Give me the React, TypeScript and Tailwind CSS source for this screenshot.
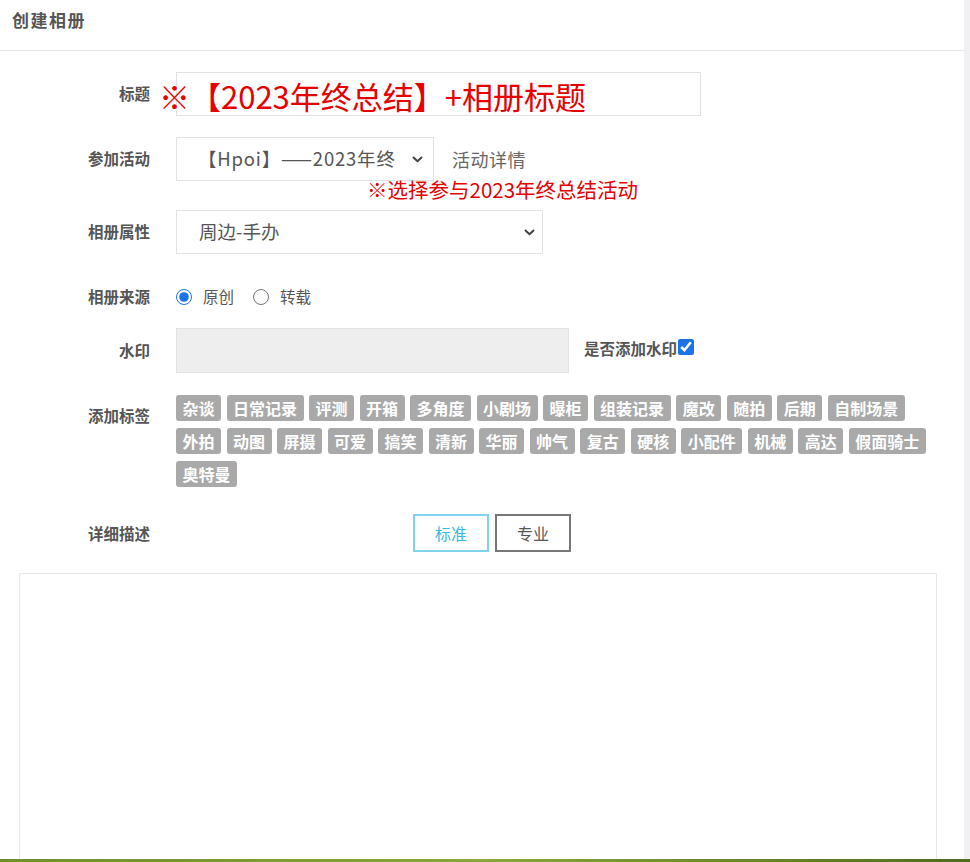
import React from 'react';

const tags = [
  '杂谈', '日常记录', '评测', '开箱', '多角度', '小剧场', '曝柜', '组装记录', '魔改', '随拍', '后期', '自制场景',
  '外拍', '动图', '屏摄', '可爱', '搞笑', '清新', '华丽', '帅气', '复古', '硬核', '小配件', '机械', '高达', '假面骑士',
  '奥特曼',
];

function Chevron() {
  return (
    <svg width="11" height="7" viewBox="0 0 11 7" className="shrink-0">
      <polyline points="1.5,1.5 5.5,5.3 9.5,1.5" fill="none" stroke="#444" strokeWidth="2" strokeLinecap="round" strokeLinejoin="round" />
    </svg>
  );
}

function Label({ children, className = '' }: { children: React.ReactNode; className?: string }) {
  return (
    <div className={`w-[150px] shrink-0 text-right text-[15.5px] font-bold text-[#555] ${className}`}>{children}</div>
  );
}

export default function App() {
  return (
    <div className="w-[970px] h-[862px] overflow-hidden flex flex-col bg-white font-['Noto_Sans_CJK_SC','Noto_Sans',sans-serif]">
      <div className="flex flex-1 min-h-0">
        <div className="w-[964px] flex flex-col min-h-0">
          {/* header */}
          <div className="h-[51px] shrink-0 border-b border-[#e6e6e6] pl-[12px] pt-[8px]">
            <span className="text-[17px] leading-[22px] font-bold text-[#555] tracking-[1.5px]">创建相册</span>
          </div>

          {/* title */}
          <div className="relative mt-[21px] flex h-[44px] items-center">
            <Label>标题</Label>
            <div className="ml-[26px] h-[44px] w-[525px] border border-[#e2e2e2]" />
            <div className="absolute left-[159px] top-[4px] text-[31px] leading-[40px] text-[#e60000] whitespace-nowrap">
              ※【2023年终总结】+相册标题
            </div>
          </div>

          {/* activity */}
          <div className="mt-[21px] flex h-[44px] items-center">
            <Label>参加活动</Label>
            <div className="ml-[26px] flex h-[44px] w-[258px] items-center border border-[#e2e2e2] pl-[21px] pr-[10px]">
              <div className="w-[203px] shrink-0 overflow-hidden whitespace-nowrap text-[18.5px] tracking-[0.8px] text-[#555]">【Hpoi】——2023年终</div>
              <div className="ml-auto"><Chevron /></div>
            </div>
            <div className="ml-[18px] text-[18px] text-[#666] tracking-[0.5px]">活动详情</div>
          </div>
          <div className="-mt-[2px] h-[20px] pl-[367px] text-[20.5px] leading-[20px] text-[#e60000] whitespace-nowrap">
            ※选择参与2023年终总结活动
          </div>

          {/* attribute */}
          <div className="mt-[11px] flex h-[44px] items-center">
            <Label>相册属性</Label>
            <div className="ml-[26px] flex h-[44px] w-[367px] items-center border border-[#e2e2e2] pl-[22px] pr-[7px]">
              <div className="flex-1 text-[18.5px] text-[#555]">周边-手办</div>
              <Chevron />
            </div>
          </div>

          {/* source */}
          <div className="mt-[31px] flex h-[24px] items-center">
            <Label>相册来源</Label>
            <label className="ml-[26px] flex items-center">
              <input type="radio" name="src" defaultChecked className="m-0 h-[16px] w-[16px] accent-[#1a73e8]" />
              <span className="ml-[11px] text-[15.5px] text-[#555]">原创</span>
            </label>
            <label className="ml-[19px] flex items-center">
              <input type="radio" name="src" className="m-0 h-[16px] w-[16px]" />
              <span className="ml-[11px] text-[15.5px] text-[#555]">转载</span>
            </label>
          </div>

          {/* watermark */}
          <div className="mt-[19px] flex h-[45px] items-center">
            <Label>水印</Label>
            <div className="ml-[26px] h-[45px] w-[393px] border border-[#e2e2e2] bg-[#eeeeee]" />
            <div className="ml-[15px] flex items-center -mt-[4px]">
              <span className="text-[15.5px] font-bold text-[#555]">是否添加水印</span>
              <input type="checkbox" defaultChecked className="m-0 ml-[1px] -mt-[3px] h-[16px] w-[16px] accent-[#1a73e8]" />
            </div>
          </div>

          {/* tags */}
          <div className="mt-[22px] flex items-start">
            <Label className="pt-[9px] leading-[22px]">添加标签</Label>
            <div className="ml-[26px] flex w-[762px] flex-wrap gap-x-[5.5px] gap-y-[7px]">
              {tags.map((t) => (
                <span
                  key={t}
                  className="h-[26px] rounded-[3px] bg-[#a9a9a9] px-[6.5px] text-[16px] font-bold leading-[26px] text-white"
                >
                  {t}
                </span>
              ))}
            </div>
          </div>

          {/* description */}
          <div className="mt-[27px] flex h-[38px] items-center">
            <Label className="mt-[2px]">详细描述</Label>
            <div className="ml-[263px] flex h-[38px] w-[76px] items-center justify-center border-2 border-[#7fd3f0] text-[16px] text-[#3bb9e6]">
              标准
            </div>
            <div className="ml-[6px] flex h-[38px] w-[76px] items-center justify-center border-2 border-[#777] text-[16px] text-[#555]">
              专业
            </div>
          </div>

          <div className="ml-[19px] mt-[21px] w-[918px] flex-1 border border-b-0 border-[#e8e8e8] bg-white" />
        </div>
        <div className="w-[6px] bg-[#f1f1f4]" />
      </div>
      <div className="h-[3px] shrink-0 bg-gradient-to-r from-[#6e8d2e] via-[#8aa63d] to-[#4f6b22]" />
    </div>
  );
}
